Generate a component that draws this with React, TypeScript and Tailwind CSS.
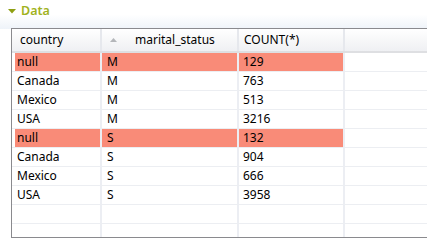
import * as React from 'react';

interface Row {
  country: string;
  status: string;
  count: string;
  highlight?: boolean;
}

const rows: Row[] = [
  { country: 'null', status: 'M', count: '129', highlight: true },
  { country: 'Canada', status: 'M', count: '763' },
  { country: 'Mexico', status: 'M', count: '513' },
  { country: 'USA', status: 'M', count: '3216' },
  { country: 'null', status: 'S', count: '132', highlight: true },
  { country: 'Canada', status: 'S', count: '904' },
  { country: 'Mexico', status: 'S', count: '666' },
  { country: 'USA', status: 'S', count: '3958' },
  { country: '', status: '', count: '' },
  { country: '', status: '', count: '' },
];

const font = { fontFamily: '"Noto Sans", "Open Sans", sans-serif' };

export default function App() {
  return (
    <div className="w-[427px] h-[245px] bg-white overflow-hidden text-[12px] text-black" style={font}>
      {/* section title */}
      <div className="h-[29px] bg-gradient-to-b from-white via-white to-[#eef3f9]">
        <div className="h-[22px] flex items-center pl-[8px]">
          <svg width="8" height="5" viewBox="0 0 8 5" className="mt-[1px]">
            <polygon points="0,0 8,0 4,4.5" fill="#8e9f12" />
          </svg>
          <span className="ml-[5px] font-semibold text-[12.5px] text-[#9fb21e]">Data</span>
        </div>
      </div>

      {/* table */}
      <div className="ml-[11px] -mt-[1px] h-[210px] border-l border-t border-b border-[#8a8a8e] overflow-hidden bg-white">
        <div className="flex h-[24px] border-b-2 border-[#dedfe2] bg-gradient-to-b from-white to-[#eff0f3]">
          <div className="w-[90px] shrink-0 border-r-2 border-[#e6e8ed] flex items-center pl-[8px]">country</div>
          <div className="w-[137px] shrink-0 border-r-2 border-[#e6e8ed] flex items-center pl-[8px]">
            <svg width="7" height="4" viewBox="0 0 7 4">
              <polygon points="0,4 7,4 3.5,0" fill="#b4b6ba" />
            </svg>
            <span className="ml-[18px]">marital_status</span>
          </div>
          <div className="w-[106px] shrink-0 border-r-2 border-[#e6e8ed] flex items-center pl-[5px]">COUNT(*)</div>
          <div className="flex-1" />
        </div>
        {rows.map((row, i) => {
          const bg = row.highlight ? 'bg-[#f98b78]' : 'bg-white';
          return (
            <div key={i} className="flex h-[19px] border-b border-[#eceef2]">
              <div className="w-[90px] shrink-0 border-r-2 border-[#eceef3] pl-[3px]">
                <div className={`h-full ${bg} flex items-center pl-[2px]`}>{row.country}</div>
              </div>
              <div className={`w-[137px] shrink-0 border-r-2 border-[#eceef3] ${bg} flex items-center pl-[5px]`}>{row.status}</div>
              <div className={`w-[106px] shrink-0 border-r-2 border-[#eceef3] ${bg} flex items-center pl-[4px]`}>{row.count}</div>
              <div className="flex-1" />
            </div>
          );
        })}
      </div>
    </div>
  );
}
